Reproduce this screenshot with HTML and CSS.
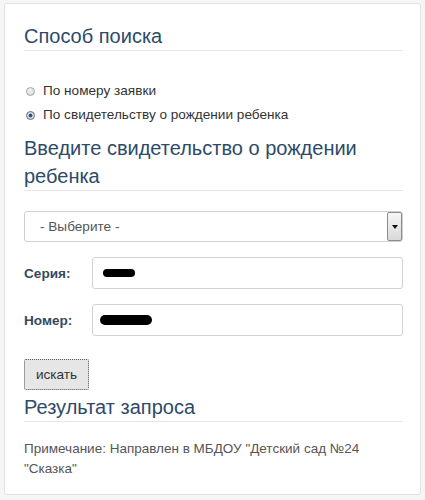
FILE: index.html
```html
<!DOCTYPE html>
<html lang="ru">
<head>
<meta charset="utf-8">
<link rel="stylesheet" href="styles.css">
</head>
<body>
<div class="card">
  <h2 class="title">Способ поиска</h2>
  <div class="radios">
    <div class="radio-row"><span class="radio"></span><span>По номеру заявки</span></div>
    <div class="radio-row"><span class="radio checked"></span><span>По свидетельству о рождении ребенка</span></div>
  </div>
  <h2 class="title title-cert">Введите свидетельство о рождении ребенка</h2>
  <div class="select">
    <span class="select-text">- Выберите -</span>
    <span class="select-arrow"><span class="tri"></span></span>
  </div>
  <div class="field">
    <span class="label">Серия:</span>
    <div class="input"><span class="blob blob-s"></span></div>
  </div>
  <div class="field">
    <span class="label">Номер:</span>
    <div class="input"><span class="blob blob-n"></span></div>
  </div>
  <div class="btn">искать</div>
  <h2 class="title title-result">Результат запроса</h2>
  <p class="note">Примечание: Направлен в МБДОУ "Детский сад №24 "Сказка"</p>
</div>
</body>
</html>
```

FILE: styles.css
```css
html, body {
  margin: 0;
  padding: 0;
}
body {
  background: #f5f5f5;
  font-family: "Liberation Sans", Arial, sans-serif;
  padding: 3px 4px 0 4px;
}
.card {
  width: 417px;
  box-sizing: border-box;
  background: #fff;
  border: 1px solid #e2e2e2;
  border-radius: 3px;
  padding: 18px 17px 16px 19px;
  height: 492px;
}
.title {
  margin: 0;
  font-size: 20px;
  font-weight: normal;
  line-height: 28px;
  color: #2d4a69;
  border-bottom: 1px solid #e6e6e6;
  padding-right: 40px;
}
.radios {
  margin-top: 27px;
}
.radio-row {
  display: flex;
  align-items: center;
  height: 24px;
  font-size: 13.6px;
  color: #333;
}
.radio {
  width: 7px;
  height: 7px;
  border-radius: 50%;
  border: 1px solid #a8a8a8;
  background: radial-gradient(circle at 40% 35%, #f2f2f2 0%, #d4d4d4 100%);
  margin-left: 2px;
  margin-right: 8px;
  position: relative;
  top: 1px;
}
.radio.checked {
  border-color: #6a6a6a;
  background: radial-gradient(circle, #1f4d7a 0, #2a5f94 35%, #cfd8e2 45%, #e6e6e6 100%);
}
.title-cert {
  margin-top: 8px;
}
.select {
  margin-top: 20px;
  height: 31px;
  box-sizing: border-box;
  border: 1px solid #cfcfcf;
  border-radius: 3px;
  display: flex;
  align-items: center;
  justify-content: space-between;
}
.select-text {
  font-size: 13.6px;
  color: #555;
  padding-left: 15px;
}
.select-arrow {
  width: 15px;
  height: 29px;
  box-sizing: border-box;
  border: 1px solid #8c8c8c;
  border-radius: 2px;
  background: linear-gradient(#f6f6f6, #d9d9d9);
  display: flex;
  align-items: center;
  justify-content: center;
}
.tri {
  width: 0;
  height: 0;
  border-left: 3px solid transparent;
  border-right: 3px solid transparent;
  border-top: 4px solid #111;
}
.field {
  display: flex;
  align-items: center;
  margin-top: 15px;
}
.label {
  width: 68px;
  font-size: 13.6px;
  font-weight: bold;
  color: #34495e;
}
.input {
  flex: 1;
  height: 32px;
  box-sizing: border-box;
  border: 1px solid #d2d2d2;
  border-radius: 3px;
  display: flex;
  align-items: center;
}
.blob {
  display: block;
  background: #000;
  border-radius: 6px;
  filter: blur(0.6px);
}
.blob-s {
  width: 32px;
  height: 8px;
  margin-left: 10px;
}
.blob-n {
  width: 52px;
  height: 10px;
  margin-left: 7px;
}
.btn {
  margin-top: 23px;
  width: 65px;
  height: 31px;
  box-sizing: border-box;
  border: 1px dotted #555;
  border-radius: 2px;
  background: #e6e6e6;
  font-size: 13.6px;
  color: #333;
  display: flex;
  align-items: center;
  justify-content: center;
}
.title-result {
  margin-top: 3px;
}
.note {
  margin: 17px 0 0 0;
  font-size: 13.5px;
  line-height: 20px;
  color: #555;
  padding-right: 30px;
}
```
